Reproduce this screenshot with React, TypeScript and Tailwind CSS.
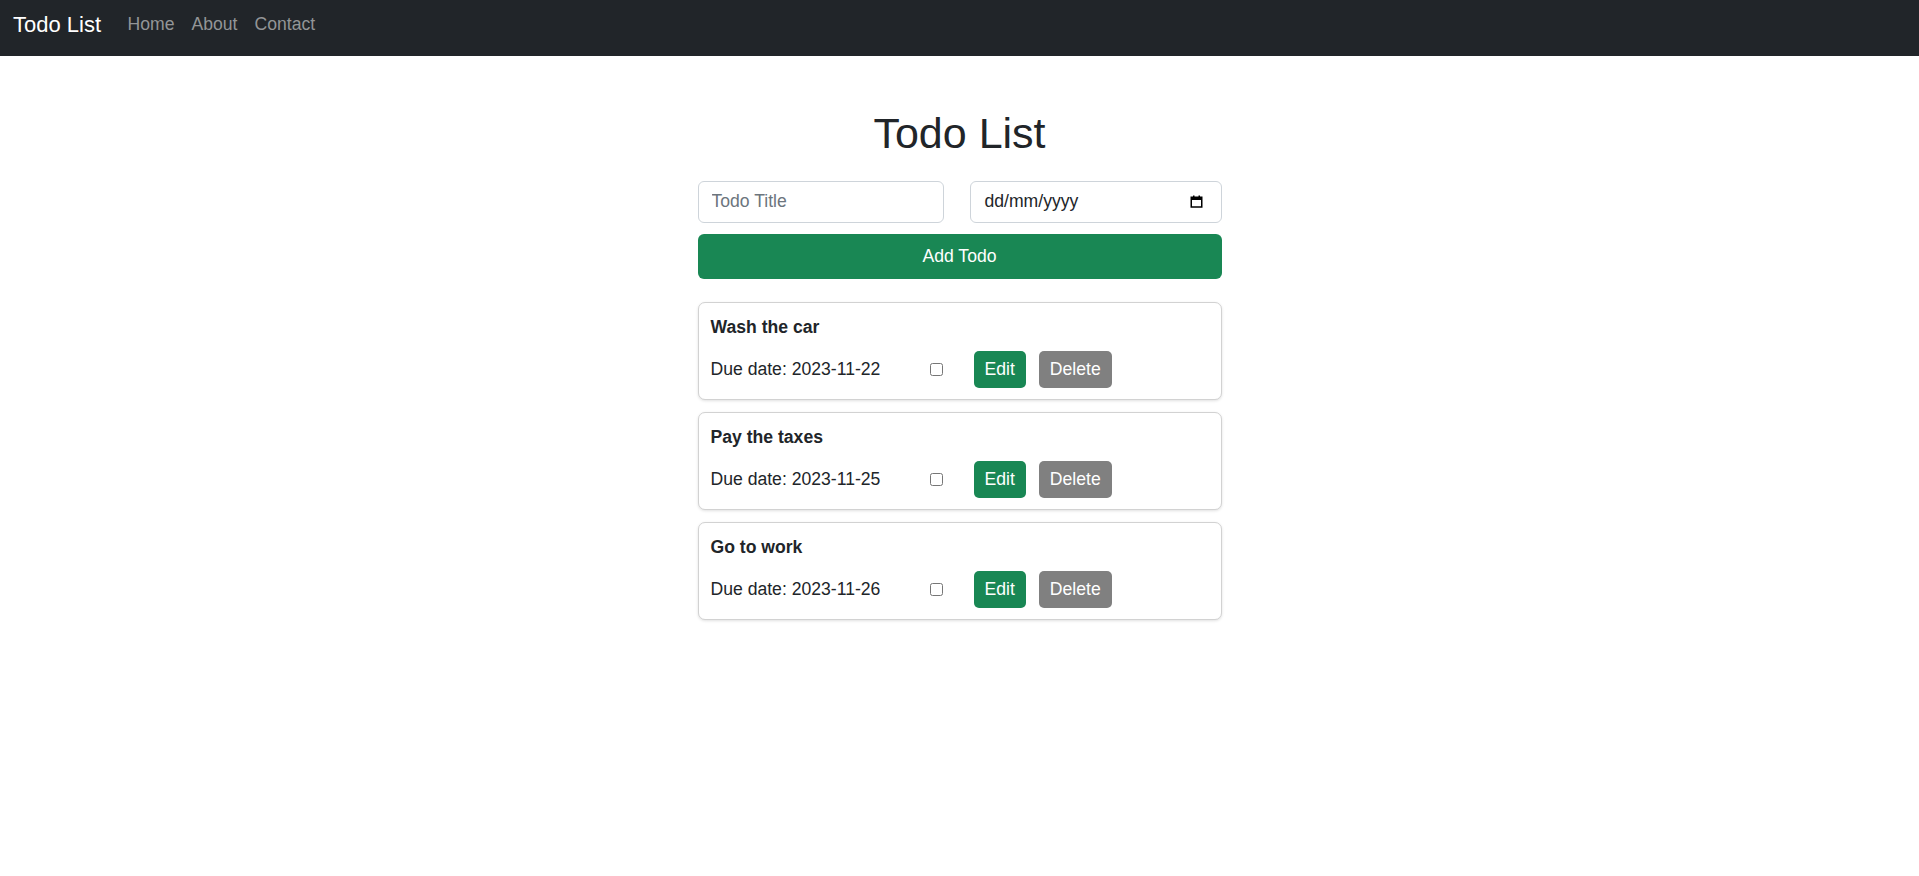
import React, { useState } from 'react';

interface Todo {
  id: number;
  title: string;
  due: string;
  done: boolean;
}

const initialTodos: Todo[] = [
  { id: 1, title: 'Wash the car', due: '2023-11-22', done: false },
  { id: 2, title: 'Pay the taxes', due: '2023-11-25', done: false },
  { id: 3, title: 'Go to work', due: '2023-11-26', done: false },
];

// Petite icône calendrier comme celle du champ date natif
function CalendarIcon() {
  return (
    <svg width="13" height="13" viewBox="0 0 13 13" fill="none">
      <rect x="1.25" y="2.25" width="10.5" height="9.75" stroke="#000" strokeWidth="1.5" />
      <rect x="1.25" y="2.25" width="10.5" height="2.75" fill="#000" />
      <rect x="3" y="0.5" width="1.5" height="2" fill="#000" />
      <rect x="8.5" y="0.5" width="1.5" height="2" fill="#000" />
    </svg>
  );
}

function TodoCard({ todo, onToggle }: { todo: Todo; onToggle: () => void }) {
  return (
    <div className="border border-[#d2d2d2] rounded-[7px] shadow-[0_1px_3px_rgba(0,0,0,0.12)] pt-[11px] pb-[11px] px-[12px] bg-white">
      <div className="font-bold text-[17.6px] leading-[26.4px] text-[#212529]">{todo.title}</div>
      <div className="mt-[10.6px] flex items-center h-[36.7px]">
        <span className="w-[219px] text-[17.6px] text-[#212529]">Due date: {todo.due}</span>
        <input
          type="checkbox"
          checked={todo.done}
          onChange={onToggle}
          className="w-[13px] h-[13px]"
        />
        <button className="ml-[31px] h-[36.7px] px-[11px] rounded-[5px] bg-[#198754] text-white text-[17.6px]">
          Edit
        </button>
        <button className="ml-[13px] h-[36.7px] px-[11px] rounded-[5px] bg-[#808080] text-white text-[17.6px]">
          Delete
        </button>
      </div>
    </div>
  );
}

export default function App() {
  const [todos, setTodos] = useState<Todo[]>(initialTodos);
  const [title, setTitle] = useState('');

  const toggle = (id: number) =>
    setTodos((prev) => prev.map((t) => (t.id === id ? { ...t, done: !t.done } : t)));

  return (
    <div className="min-h-screen bg-white font-['Liberation_Sans',Arial,sans-serif] text-[#212529]">
      {/* Barre de navigation */}
      <nav className="h-[56px] bg-[#212529] flex items-center pb-[7px] px-[13px]">
        <span className="text-[22px] text-white">Todo List</span>
        <div className="ml-[26.5px] flex items-center gap-[17px] text-[17.6px] text-[#939597]">
          <a href="#">Home</a>
          <a href="#">About</a>
          <a href="#">Contact</a>
        </div>
      </nav>

      <div className="w-[524px] mx-auto">
        <h1 className="mt-[51.5px] text-center text-[43px] leading-[51px] text-[#212529]">Todo List</h1>

        {/* Formulaire */}
        <div className="mt-[22px] flex gap-[26px]">
          <input
            type="text"
            value={title}
            onChange={(e) => setTitle(e.target.value)}
            placeholder="Todo Title"
            className="flex-1 min-w-0 h-[42px] border border-[#ced4da] rounded-[6px] px-[13px] text-[17.6px] text-[#212529] placeholder-[#6c757d] outline-none"
          />
          <div className="flex-1 min-w-0 h-[42px] border border-[#ced4da] rounded-[6px] pl-[14px] pr-[18px] flex items-center justify-between text-[17.6px] text-[#212529]">
            <span>dd/mm/yyyy</span>
            <CalendarIcon />
          </div>
        </div>
        <button className="mt-[11px] w-full h-[45.5px] rounded-[6px] bg-[#198754] text-white text-[17.6px]">
          Add Todo
        </button>

        {/* Liste des tâches */}
        <div className="mt-[23px] flex flex-col gap-[12.4px]">
          {todos.map((t) => (
            <TodoCard key={t.id} todo={t} onToggle={() => toggle(t.id)} />
          ))}
        </div>
      </div>
    </div>
  );
}
